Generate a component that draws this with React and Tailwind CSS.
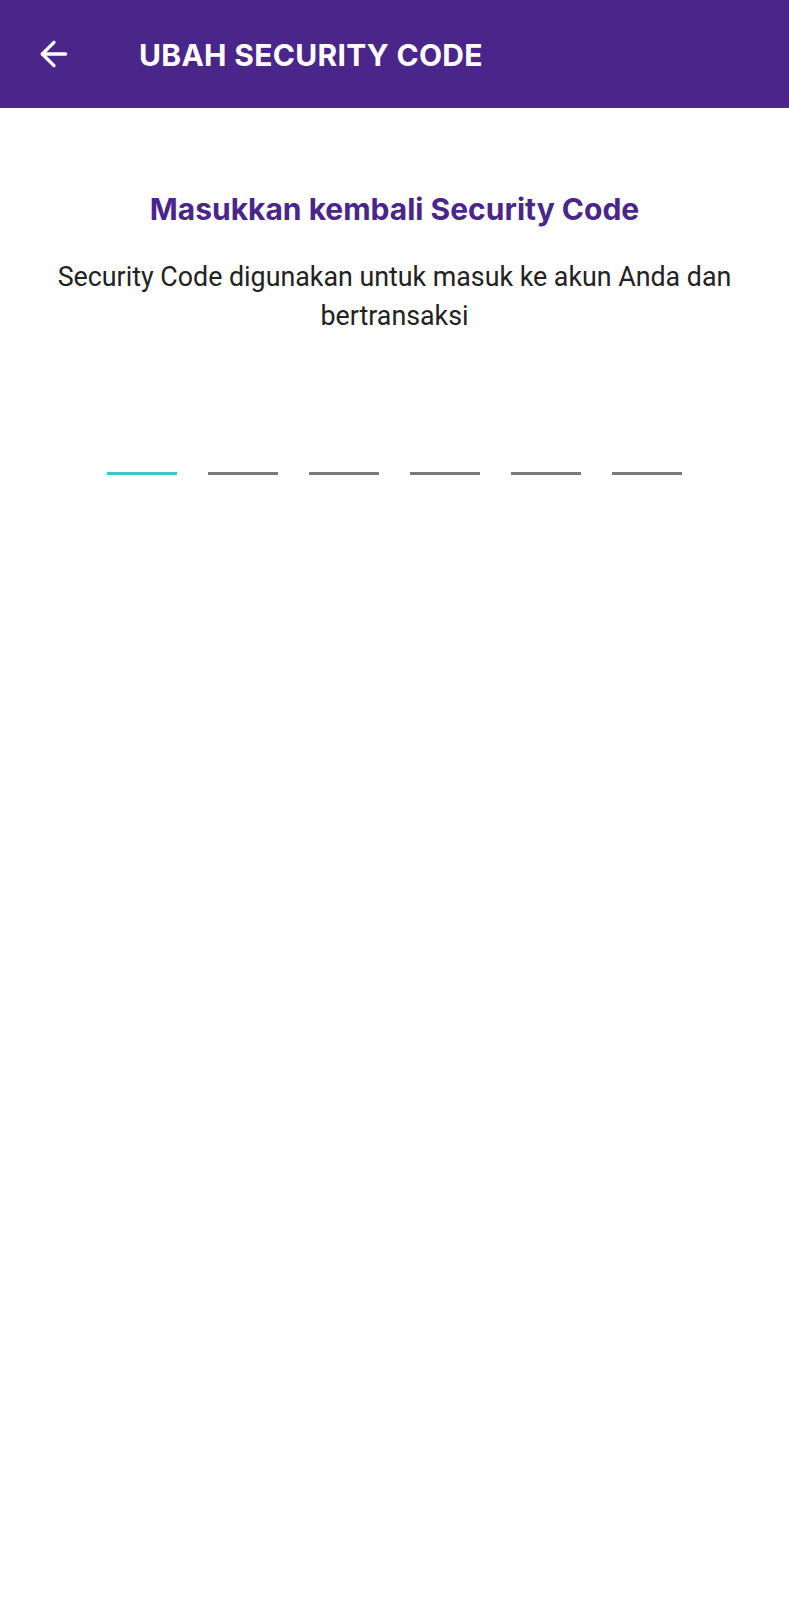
import { ArrowLeft } from 'lucide-react'

const slots = [0, 1, 2, 3, 4, 5]

export default function App() {
  const active = 0
  return (
    <div className="min-h-[1600px] w-full bg-white" style={{ fontFamily: 'Roboto, "Noto Sans", sans-serif' }}>
      <header className="flex h-[108px] items-center bg-[#4a268a] text-white">
        <button className="ml-[34px] flex h-[40px] w-[40px] items-center justify-center">
          <ArrowLeft size={40} strokeWidth={2} />
        </button>
        <h1 className="ml-[65px] pt-[3px] text-[30px] font-bold tracking-[0.3px]" style={{ fontFamily: 'Inter, "Liberation Sans", sans-serif' }}>
          UBAH SECURITY CODE
        </h1>
      </header>

      <main className="flex flex-col items-center px-[20px]">
        <h2 className="mt-[79px] text-[30px] font-bold text-[#4a268a]" style={{ fontFamily: 'Inter, "Liberation Sans", sans-serif' }}>
          Masukkan kembali Security Code
        </h2>
        <p className="mt-[26px] text-center text-[26.8px] leading-[39px] text-[#222222]">
          Security Code digunakan untuk masuk ke akun Anda dan bertransaksi
        </p>

        <div className="mt-[136px] flex gap-[31px]">
          {slots.map(i => (
            <div key={i} className={`h-[3px] w-[70px] ${i === active ? 'bg-[#3cc6d0]' : 'bg-[#7a7a7a]'}`} />
          ))}
        </div>
      </main>
    </div>
  )
}
